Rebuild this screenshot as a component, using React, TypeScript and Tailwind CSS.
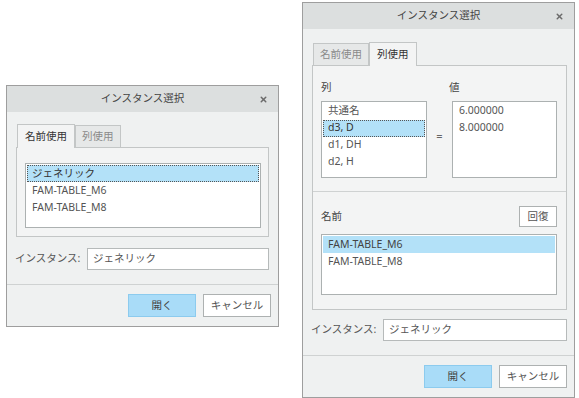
import { X } from "lucide-react";

const font = "font-['Noto_Sans','Noto_Sans_CJK_JP',sans-serif]";

function TitleBar() {
  return (
    <div className="grid h-[26px] shrink-0 grid-cols-[1fr_auto_1fr] items-center bg-[#dcdfdf] text-[10.5px] text-[#444]">
      <span />
      <span>インスタンス選択</span>
      <span className="flex justify-end pr-[10px]">
        <X className="h-[9px] w-[9px] text-[#6b6b6b]" strokeWidth={4} />
      </span>
    </div>
  );
}

function Tabs({ active }: { active: 0 | 1 }) {
  const labels = ["名前使用", "列使用"];
  return (
    <div className="relative z-10 -mb-px flex items-end pl-px">
      {labels.map((label, i) =>
        i === active ? (
          <div
            key={i}
            className="flex h-[24px] items-center border border-b-0 border-[#c3c6c6] bg-[#f3f4f4] px-[7px] text-[10.5px] text-[#333]"
          >
            {label}
          </div>
        ) : (
          <div
            key={i}
            className="flex h-[23px] items-center border border-[#c3c6c6] bg-[#e6e8e8] px-[6px] text-[10.5px] text-[#8a8a8a]"
          >
            {label}
          </div>
        )
      )}
    </div>
  );
}

type Row = { text: string; selected?: boolean; focus?: boolean };

function ListBox({ rows, className }: { rows: Row[]; className: string }) {
  return (
    <div className={`border border-[#acb1b1] bg-white p-px ${className}`}>
      {rows.map((r, i) => (
        <div
          key={i}
          className={
            r.selected
              ? r.focus
                ? "flex h-[17px] items-center border border-dotted border-[#555] bg-[#b3e1f8] px-[4px] text-[10.5px] text-[#333]"
                : "flex h-[17px] items-center border border-transparent bg-[#b3e1f8] px-[4px] text-[10.5px] text-[#444]"
              : "flex h-[17px] items-center border border-transparent px-[4px] text-[10.5px] text-[#555]"
          }
        >
          {r.text}
        </div>
      ))}
    </div>
  );
}

function InstanceRow() {
  return (
    <div className="flex items-center">
      <span className="w-[80px] shrink-0 whitespace-nowrap pl-[8px] text-[10.5px] text-[#555]">インスタンス:</span>
      <div className="flex h-[22px] flex-1 items-center border border-[#b6baba] bg-white px-[5px] text-[10.5px] text-[#555]">
        ジェネリック
      </div>
    </div>
  );
}

function Footer() {
  return (
    <div className="mt-auto flex h-[42px] shrink-0 items-start justify-end gap-[7px] border-t border-[#cfd2d2] pt-[9px] pr-[7px]">
      <button className="h-[23px] w-[68px] border border-[#8ccbee] bg-[#a9dcf8] text-[10.5px] text-[#444]">
        開く
      </button>
      <button className="h-[23px] w-[68px] border border-[#adb1b1] bg-white text-[10.5px] text-[#555]">
        キャンセル
      </button>
    </div>
  );
}

function NameDialog() {
  return (
    <div className="mt-[85px] flex h-[242px] w-[273px] flex-col border border-[#9e9e9e] bg-[#eff1f1]">
      <TitleBar />
      <div className="pt-[12px] pr-[9px] pl-[9px]">
        <Tabs active={0} />
        <div className="h-[90px] border border-[#c3c6c6] bg-[#f3f4f4] pt-[15px] pr-[7px] pl-[8px]">
          <ListBox
            className="h-[65px]"
            rows={[
              { text: "ジェネリック", selected: true, focus: true },
              { text: "FAM-TABLE_M6" },
              { text: "FAM-TABLE_M8" },
            ]}
          />
        </div>
      </div>
      <div className="mt-[11px] pr-[9px]">
        <InstanceRow />
      </div>
      <Footer />
    </div>
  );
}

function ColumnDialog() {
  return (
    <div className="ml-[23px] mt-[2px] flex h-[396px] w-[273px] flex-col border border-[#9e9e9e] bg-[#eff1f1]">
      <TitleBar />
      <div className="pt-[13px] pr-[7px] pl-[9px]">
        <Tabs active={1} />
        <div className="flex h-[245px] flex-col border border-[#c3c6c6] bg-[#f3f4f4]">
          <div className="flex h-[126px] flex-col border-b border-[#cfd2d2] pt-[14px] pr-[9px] pl-[8px]">
            <div className="flex text-[10.5px] text-[#444]">
              <span className="w-[128px]">列</span>
              <span>値</span>
            </div>
            <div className="mt-[5px] flex items-center">
              <ListBox
                className="h-[77px] w-[106px]"
                rows={[
                  { text: "共通名" },
                  { text: "d3, D", selected: true, focus: true },
                  { text: "d1, DH" },
                  { text: "d2, H" },
                ]}
              />
              <span className="w-[25px] pb-[6px] text-center text-[11px] text-[#666]">=</span>
              <ListBox
                className="h-[77px] flex-1"
                rows={[{ text: "6.000000" }, { text: "8.000000" }]}
              />
            </div>
          </div>
          <div className="flex flex-col pt-[14px] pr-[9px] pl-[8px]">
            <div className="flex items-center justify-between">
              <span className="text-[10.5px] text-[#444]">名前</span>
              <button className="h-[21px] w-[38px] border border-[#adb1b1] bg-white text-[10.5px] text-[#555]">
                回復
              </button>
            </div>
            <ListBox
              className="mt-[7px] h-[61px]"
              rows={[{ text: "FAM-TABLE_M6", selected: true }, { text: "FAM-TABLE_M8" }]}
            />
          </div>
        </div>
      </div>
      <div className="mt-[9px] pr-[7px]">
        <InstanceRow />
      </div>
      <Footer />
    </div>
  );
}

export default function App() {
  return (
    <div className={`flex h-[398px] w-[579px] items-start bg-white pl-[6px] ${font}`}>
      <NameDialog />
      <ColumnDialog />
    </div>
  );
}
